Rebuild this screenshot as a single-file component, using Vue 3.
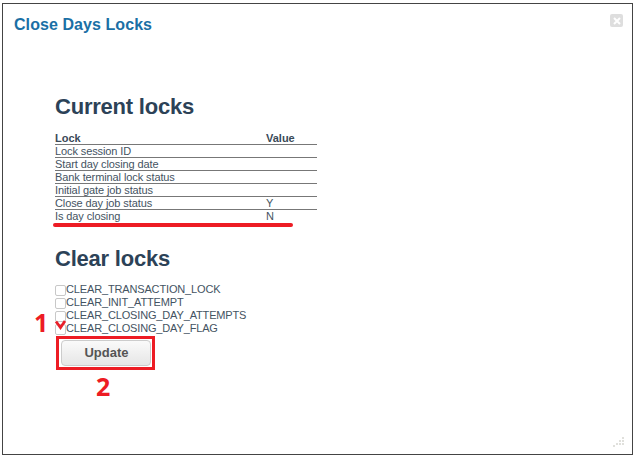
<script setup>
const rows = [
  { name: 'Lock session ID', value: '' },
  { name: 'Start day closing date', value: '' },
  { name: 'Bank terminal lock status', value: '' },
  { name: 'Initial gate job status', value: '' },
  { name: 'Close day job status', value: 'Y' },
  { name: 'Is day closing', value: 'N' },
]
const locks = ['CLEAR_TRANSACTION_LOCK', 'CLEAR_INIT_ATTEMPT', 'CLEAR_CLOSING_DAY_ATTEMPTS', 'CLEAR_CLOSING_DAY_FLAG']
</script>

<template>
  <div class="page">
    <div class="dialog">
      <h1 class="title">Close Days Locks</h1>
      <span class="close"><svg width="8" height="8" viewBox="0 0 8 8"><path d="M1 1l6 6M7 1l-6 6" stroke="#fff" stroke-width="2" /></svg></span>
      <div class="body">
        <h2 class="current">Current locks</h2>
        <div class="table">
          <div class="rows">
            <div class="row head"><span class="c1">Lock</span><span class="c2">Value</span></div>
            <div v-for="r in rows" :key="r.name" class="row"><span class="c1">{{ r.name }}</span><span class="c2">{{ r.value }}</span></div>
          </div>
          <div class="underline"></div>
        </div>
        <h2 class="clear">Clear locks</h2>
        <div class="checks">
          <label v-for="l in locks" :key="l" class="check"><span class="box"></span>{{ l }}</label>
          <svg class="tick" width="14" height="10" viewBox="0 0 14 10"><path d="M2 1.500l4.500 6L11 1" fill="none" stroke="#e8202a" stroke-width="2.800" /></svg>
          <span class="num one">1</span>
        </div>
        <div class="frame"><button class="update">Update</button></div>
        <div class="num two">2</div>
      </div>
      <svg class="grip" width="12" height="12" viewBox="0 0 12 12"><path d="M9 1h2v2H9zM6 4h2v2H6zM9 4h2v2H9zM3 7h2v2H3zM6 7h2v2H6zM9 7h2v2H9zM0 9h2v2H0z" fill="#e0e0dc" /></svg>
    </div>
  </div>
</template>

<style scoped>
.page { width: 636px; height: 458px; padding: 3px 0 0 2px; box-sizing: border-box; background: #fff; font-family: "Liberation Sans", Arial, sans-serif; }
.dialog { position: relative; width: 631px; height: 452px; box-sizing: border-box; border: 1px solid #444; background: #fff; }
.title { margin: 0; position: absolute; left: 11px; top: 12px; font-size: 16px; line-height: 18px; font-weight: bold; letter-spacing: 0.07px; color: #1a6fa5; }
.close { position: absolute; right: 9px; top: 10px; width: 13px; height: 13px; border-radius: 2px; background: #dedede; display: flex; align-items: center; justify-content: center; }
.body { padding: 90px 0 0 52px; }
h2 { margin: 0; font-weight: bold; color: #2c4257; font-size: 22px; line-height: 26px; letter-spacing: -0.22px; }
.table { position: relative; margin-top: 12px; width: 262px; }
.row { display: flex; height: 13px; font-size: 11px; line-height: 12px; letter-spacing: -0.1px; color: #445362; border-bottom: 1px solid #777; box-sizing: border-box; }
.row:last-child { border-bottom: 0; }
.head { font-weight: bold; letter-spacing: 0; color: #3a4a58; }
.c1 { width: 211px; }
.underline { position: absolute; left: -2px; top: 91px; width: 240px; height: 4px; border-radius: 2px; background: #ed1c24; }
.clear { margin-top: 23px; }
.checks { position: relative; margin-top: 10px; }
.check { display: flex; align-items: center; height: 13px; font-size: 11px; letter-spacing: -0.15px; color: #445362; }
.box { width: 9px; height: 9px; margin-top: 3px; border: 1px solid #c8c8c8; border-radius: 2px; background: #fff; }
.tick { position: absolute; left: -1px; top: 38px; }
.num { font-size: 25px; line-height: 26px; font-weight: bold; color: #ed1c24; font-family: "Open Sans", sans-serif; }
.one { position: absolute; left: -21px; top: 27px; }
.frame { margin: 2px 0 0 1px; width: 99px; height: 34px; box-sizing: border-box; border: 3px solid #ed1c24; display: flex; align-items: center; justify-content: center; }
.update { width: 90px; height: 26px; padding: 0 0 2px 2px; border: 1px solid #ccc; border-radius: 4px; background: linear-gradient(#fafafa, #e6e6e6); font: bold 13px "Liberation Sans", Arial, sans-serif; color: #555; }
.two { margin: 3px 0 0 41px; }
.grip { position: absolute; right: 7px; bottom: 6px; }
</style>
